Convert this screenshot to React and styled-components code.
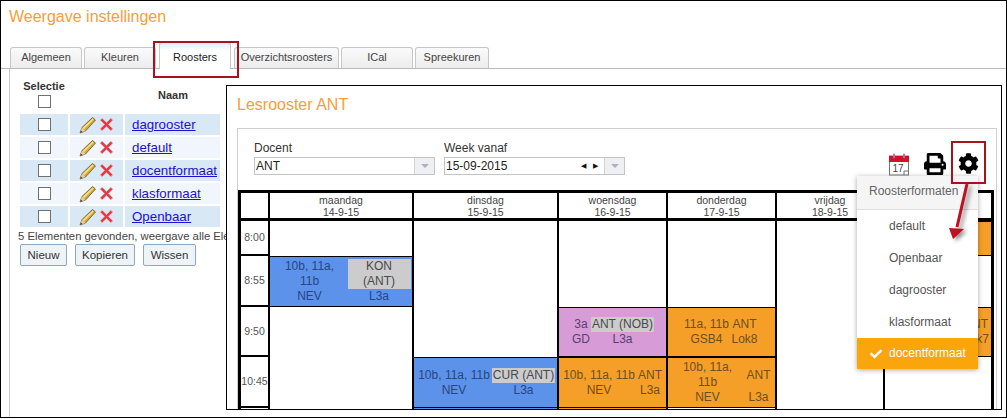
import styled, { createGlobalStyle } from "styled-components";
import { FaPrint, FaCog, FaCheck } from "react-icons/fa";

const GlobalStyle = createGlobalStyle`
  html, body {
    margin: 0;
    padding: 0;
    background: #fff;
    font-family: "Liberation Sans", Arial, sans-serif;
  }
`;

const Frame = styled.div`
  position: relative;
  width: 1007px;
  height: 418px;
  box-sizing: border-box;
  border: 1px solid #000;
  overflow: hidden;
`;

const PageTitle = styled.h1`
  margin: 0;
  padding-left: 8px;
  height: 45px;
  font-size: 16px;
  font-weight: normal;
  line-height: 31px;
  color: #f5a036;
`;

const TabBar = styled.div`
  display: flex;
  align-items: flex-end;
  gap: 2px;
  height: 23px;
  box-sizing: border-box;
  padding-left: 9px;
  border-bottom: 1px solid #b9b9b9;
`;

const Tab = styled.div`
  width: ${(p) => p.$width || 72}px;
  height: ${(p) => (p.$active ? 27 : 22)}px;
  margin: 0 ${(p) => (p.$active ? 1 : 0)}px -1px;
  box-sizing: border-box;
  border: 1px solid #c6c6c6;
  border-bottom: ${(p) => (p.$active ? "none" : "1px solid #b9b9b9")};
  border-radius: 3px 3px 0 0;
  background: ${(p) => (p.$active ? "linear-gradient(#dfeafa, #fff 30%)" : "linear-gradient(#fafafa, #ececec)")};
  font-size: 11px;
  line-height: ${(p) => (p.$active ? 28 : 18)}px;
  text-align: center;
  color: ${(p) => (p.$active ? "#222" : "#444")};
`;

const TabPanel = styled.div`
  display: flex;
  align-items: flex-start;
  margin-left: 8px;
  height: 349px;
  box-sizing: border-box;
  padding-top: 16px;
  border-left: 1px solid #c6c6c6;
`;

const Sidebar = styled.div`
  flex: none;
  width: 216px;
  margin-top: -4px;
  padding-left: 10px;
  box-sizing: border-box;
  overflow: hidden;
  white-space: nowrap;
`;

const HeadRow = styled.div`
  display: grid;
  grid-template-columns: 48px 54px 96px;
  column-gap: 2px;
  height: 33px;
  font-size: 11px;
  font-weight: bold;
  color: #333;
`;

const SelectHead = styled.div`
  display: flex;
  flex-direction: column;
  align-items: center;
  gap: 3px;
  line-height: 11px;
`;

const NameHead = styled.div`
  grid-column: 2 / 4;
  padding: 8px 0 0 88px;
  line-height: 13px;
`;

const Check = styled.span`
  display: block;
  width: 13px;
  height: 13px;
  box-sizing: border-box;
  border: 1px solid #707070;
  background: #fff;
`;

const Row = styled.div`
  display: grid;
  grid-template-columns: 48px 53px 95px;
  column-gap: 2px;
  height: 21px;
  margin-bottom: 2px;
`;

const RowCell = styled.div`
  display: flex;
  align-items: center;
  justify-content: ${(p) => p.$justify || "center"};
  gap: ${(p) => p.$gap || 0}px;
  padding-left: ${(p) => p.$pad || 0}px;
  background: ${(p) => (p.$odd ? "#d9e8f5" : "#f0f6fc")};
`;

const NameLink = styled.a`
  font-size: 13.3px;
  color: #2211cc;
  text-decoration: underline;
`;

const ResultText = styled.div`
  margin: 0 0 0 -2px;
  font-size: 11.3px;
  line-height: 14px;
  color: #444;
`;

const ButtonRow = styled.div`
  display: flex;
  gap: 8px;
  margin-top: 1px;
`;

const Button = styled.button`
  height: 22px;
  width: ${(p) => p.$width}px;
  padding: 0;
  box-sizing: border-box;
  border: 1px solid #8fa7be;
  border-radius: 2px;
  background: #eef3f8;
  font-family: inherit;
  font-size: 11.5px;
  color: #333;
`;

const Card = styled.div`
  flex: none;
  width: 776px;
  height: 325px;
  box-sizing: border-box;
  padding: 0 4px 0 10px;
  border: 1px solid #000;
  overflow: hidden;
`;

const CardTitle = styled.h2`
  margin: 0;
  height: 42px;
  font-size: 16px;
  font-weight: normal;
  line-height: 37px;
  color: #f5a036;
`;

const SchedulePanel = styled.div`
  position: relative;
  height: 300px;
  box-sizing: border-box;
  border: 1px solid #d0d0d0;
`;

const FilterBar = styled.div`
  display: flex;
  align-items: flex-start;
  height: 61px;
  box-sizing: border-box;
  padding: 11px 17px 0 16px;
`;

const Field = styled.div`
  width: ${(p) => p.$width}px;
  margin-right: 9px;
  font-size: 12px;
  line-height: 16px;
  color: #333;
`;

const FieldBox = styled.div`
  display: flex;
  align-items: center;
  height: 18px;
  margin-top: 1px;
  box-sizing: border-box;
  border: 1px solid #c4c4c4;
  background: #fff;
  color: #222;
`;

const FieldValue = styled.span`
  flex: 1;
  padding-left: 1px;
`;

const Spinner = styled.span`
  display: flex;
  gap: 7px;
  margin-right: 6px;
  font-size: 7px;
  color: #111;
`;

const DropButton = styled.span`
  display: flex;
  align-items: center;
  justify-content: center;
  width: 19px;
  height: 16px;
  border-left: 1px solid #d5d5d5;
  background: #eeeff2;
  &::after {
    content: "";
    border: 4px solid transparent;
    border-top: 4px solid #aeb2bc;
    border-bottom: none;
  }
`;

const Tools = styled.div`
  display: flex;
  align-items: flex-start;
  gap: 12px;
  margin-left: auto;
  padding-top: 13px;
`;

const CalendarSvg = styled.svg`
  margin-right: 3px;
`;

const TimeTable = styled.div`
  display: flex;
  width: 756px;
  box-sizing: border-box;
  border-top: 3px solid #000;
  border-left: 3px solid #000;
  border-right: 3px solid #000;
`;

const TimeColumn = styled.div`
  flex: none;
  width: 27px;
  border-right: 2px solid #000;
`;

const DayColumn = styled.div`
  flex: none;
  width: ${(p) => p.$width}px;
  box-sizing: border-box;
  border-right: ${(p) => (p.$last ? "none" : "2px solid #000")};
`;

const DayHead = styled.div`
  height: 28px;
  box-sizing: border-box;
  padding-top: 1px;
  border-bottom: 3px solid #000;
  font-size: 10.5px;
  line-height: 12px;
  text-align: center;
  color: #444;
`;

const TimeCell = styled.div`
  display: flex;
  align-items: center;
  justify-content: center;
  height: ${(p) => p.$height}px;
  box-sizing: border-box;
  padding-bottom: 1px;
  border-bottom: 2px solid #000;
  font-size: 10.5px;
  color: #555;
`;

const Slot = styled.div`
  height: ${(p) => p.$height}px;
`;

const Lesson = styled.div`
  display: grid;
  grid-template-columns: ${(p) => p.$cols};
  justify-content: center;
  align-content: center;
  height: 100%;
  box-sizing: border-box;
  border-top: ${(p) => (p.$open ? "none" : "1px solid #000")};
  border-bottom: 1px solid #000;
  background: ${(p) => p.$bg};
  font-size: 12px;
  line-height: 15px;
  text-align: center;
  white-space: pre-line;
  color: ${(p) => p.$ink};
`;

const Subject = styled.div`
  display: flex;
  align-items: center;
  justify-content: center;
  color: ${(p) => (p.$boxed ? "#4a4a4a" : "inherit")};
  background: ${(p) => (p.$boxed ? "#cccccc" : "transparent")};
  align-self: ${(p) => (p.$boxed ? "center" : "stretch")};
`;

const Menu = styled.div`
  position: absolute;
  left: 619px;
  top: 47px;
  width: 121px;
  background: #fff;
  box-shadow: 0 1px 5px rgba(0, 0, 0, 0.35);
  font-size: 12px;
  color: #555;
`;

const MenuHead = styled.div`
  height: 34px;
  box-sizing: border-box;
  padding-left: 12px;
  background: #f5f5f5;
  border-bottom: 1px solid #ddd;
  line-height: 31px;
  color: #666;
`;

const MenuItem = styled.div`
  position: relative;
  height: ${(p) => (p.$active ? 31 : 32)}px;
  padding-left: 32px;
  line-height: ${(p) => (p.$active ? 31 : 32)}px;
  background: ${(p) => (p.$active ? "#fba50c" : "#fff")};
  color: ${(p) => (p.$active ? "#fff" : "#555")};
  svg {
    position: absolute;
    left: 13px;
    top: 10px;
  }
`;

const Callout = styled.div`
  position: absolute;
  left: ${(p) => p.$left}px;
  top: ${(p) => p.$top}px;
  width: ${(p) => p.$width}px;
  height: ${(p) => p.$height}px;
  box-sizing: border-box;
  border: 2px solid #a5131f;
  pointer-events: none;
`;

const ArrowOverlay = styled.svg`
  position: absolute;
  left: 935px;
  top: 180px;
  filter: drop-shadow(3px 2px 2px rgba(0, 0, 0, 0.45));
`;

const Pencil = () => (
  <svg width="18" height="18" viewBox="0 0 18 18">
    <path d="M1 17 L3 11.5 L13.5 1.5 L16.5 4 L6.5 15 Z" fill="#d9a73a" stroke="#6f5f38" strokeWidth="0.9" />
    <path d="M3.8 11.8 L13.6 2.6 L14.6 3.4 L5 13.2 Z" fill="#f8e08a" />
    <path d="M1 17 L3 11.5 L6.5 15 Z" fill="#e6cda0" />
    <path d="M1 17 L1.9 14.4 L3.6 16 Z" fill="#444" />
  </svg>
);

const Cross = () => (
  <svg width="15" height="15" viewBox="0 0 15 15">
    <path
      d="M1.2 3.2 L3.2 1.2 L7.5 5.5 L11.8 1.2 L13.8 3.2 L9.5 7.5 L13.8 11.8 L11.8 13.8 L7.5 9.5 L3.2 13.8 L1.2 11.8 L5.5 7.5 Z"
      fill="#e63b46"
      stroke="#eda9ad"
      strokeWidth="0.9"
    />
  </svg>
);

const CalendarIcon = () => (
  <CalendarSvg width="20" height="23" viewBox="0 0 20 23">
    <rect x="0.5" y="3" width="19" height="19" fill="#fff" stroke="#777" />
    <rect x="0" y="3" width="20" height="6" fill="#d0112b" />
    <rect x="4" y="0.5" width="2" height="5" rx="1" fill="#888" />
    <rect x="14" y="0.5" width="2" height="5" rx="1" fill="#888" />
    <text x="9" y="19" fontSize="10" textAnchor="middle" fill="#444" fontFamily="Liberation Sans, sans-serif">
      17
    </text>
    <path d="M15 22 V18 H19" fill="none" stroke="#777" />
  </CalendarSvg>
);

const DownArrow = () => (
  <ArrowOverlay width="40" height="65" viewBox="0 0 40 65">
    <path d="M31 3 L21 46" stroke="#c00f1e" strokeWidth="3" fill="none" />
    <path d="M13 47 L28 48 L17 58 Z" fill="#c00f1e" />
  </ArrowOverlay>
);

const formats = ["dagrooster", "default", "docentformaat", "klasformaat", "Openbaar"];
const tabs = [
  { label: "Algemeen" },
  { label: "Kleuren" },
  { label: "Roosters", active: true },
  { label: "Overzichtsroosters", width: 105 },
  { label: "ICal" },
  { label: "Spreekuren", width: 74 },
];
const times = [
  { label: "8:00", height: 35 },
  { label: "8:55", height: 51 },
  { label: "9:50", height: 50 },
  { label: "10:45", height: 51 },
  { label: "", height: 20 },
];
const slotHeights = [35, 51, 50, 51, 20];

const palette = {
  blue: { bg: "#5d92ea", ink: "#27477f" },
  orange: { bg: "#f59f29", ink: "#6f4f1c" },
  purple: { bg: "#d79bd8", ink: "#5a3f70" },
};

const days = [
  {
    name: "maandag", date: "14-9-15", width: 144,
    lessons: {
      1: { color: "blue", cols: "76px 63px", groups: "10b, 11a,\n11b", subject: "KON\n(ANT)", boxed: true, teacher: "NEV", room: "L3a" },
    },
  },
  {
    name: "dinsdag", date: "15-9-15", width: 145,
    lessons: {
      3: { color: "blue", cols: "76px 63px", groups: "10b, 11a, 11b", subject: "CUR (ANT)", boxed: true, teacher: "NEV", room: "L3a" },
      4: { color: "blue", open: true },
    },
  },
  {
    name: "woensdag", date: "16-9-15", width: 109,
    lessons: {
      2: { color: "purple", cols: "20px 63px", groups: "3a", subject: "ANT (NOB)", boxed: true, teacher: "GD", room: "L3a" },
      3: { color: "orange", cols: "75px 27px", groups: "10b, 11a, 11b", subject: "ANT", teacher: "NEV", room: "L3a" },
      4: { color: "orange", open: true },
    },
  },
  {
    name: "donderdag", date: "17-9-15", width: 109,
    lessons: {
      2: { color: "orange", cols: "46px 30px", groups: "11a, 11b", subject: "ANT", teacher: "GSB4", room: "Lok8" },
      3: { color: "orange", cols: "74px 28px", groups: "10b, 11a,\n11b", subject: "ANT", teacher: "NEV", room: "L3a" },
    },
  },
  { name: "vrijdag", date: "18-9-15", width: 108, lessons: {} },
  {
    name: "", date: "", width: 106, last: true,
    lessons: {
      0: { color: "orange" },
      2: { color: "orange", cols: "76px 30px", groups: "11a, 11b", subject: "ANT", teacher: "GSB4", room: "Lok7" },
    },
  },
];

function LessonBlock({ lesson }) {
  const { bg, ink } = palette[lesson.color];
  if (!lesson.groups) return <Lesson $bg={bg} $ink={ink} $cols="1fr" $open={lesson.open} />;
  return (
    <Lesson $bg={bg} $ink={ink} $cols={lesson.cols}>
      <div>{lesson.groups}</div>
      <Subject $boxed={lesson.boxed}>{lesson.subject}</Subject>
      <div>{lesson.teacher}</div>
      <div>{lesson.room}</div>
    </Lesson>
  );
}

export default function App() {
  return (
    <>
      <GlobalStyle />
      <Frame>
        <PageTitle>Weergave instellingen</PageTitle>
        <TabBar>
          {tabs.map((tab) => (
            <Tab key={tab.label} $active={tab.active} $width={tab.width}>
              {tab.label}
            </Tab>
          ))}
        </TabBar>
        <TabPanel>
          <Sidebar>
            <HeadRow>
              <SelectHead>
                Selectie
                <Check />
              </SelectHead>
              <NameHead>Naam</NameHead>
            </HeadRow>
            {formats.map((name, i) => (
              <Row key={name}>
                <RowCell $odd={i % 2 === 0}>
                  <Check />
                </RowCell>
                <RowCell $odd={i % 2 === 0} $gap={2}>
                  <Pencil />
                  <Cross />
                </RowCell>
                <RowCell $odd={i % 2 === 0} $justify="flex-start" $pad={7}>
                  <NameLink href="#">{name}</NameLink>
                </RowCell>
              </Row>
            ))}
            <ResultText>5 Elementen gevonden, weergave alle Elementen</ResultText>
            <ButtonRow>
              <Button $width={47}>Nieuw</Button>
              <Button $width={60}>Kopieren</Button>
              <Button $width={53}>Wissen</Button>
            </ButtonRow>
          </Sidebar>
          <Card>
            <CardTitle>Lesrooster ANT</CardTitle>
            <SchedulePanel>
              <FilterBar>
                <Field $width={181}>
                  Docent
                  <FieldBox>
                    <FieldValue>ANT</FieldValue>
                    <DropButton />
                  </FieldBox>
                </Field>
                <Field $width={181}>
                  Week vanaf
                  <FieldBox>
                    <FieldValue>15-09-2015</FieldValue>
                    <Spinner>
                      <span>◀</span>
                      <span>▶</span>
                    </Spinner>
                    <DropButton />
                  </FieldBox>
                </Field>
                <Tools>
                  <CalendarIcon />
                  <FaPrint size={22} color="#000" />
                  <FaCog size={21} color="#000" />
                </Tools>
              </FilterBar>
              <TimeTable>
                <TimeColumn>
                  <DayHead />
                  {times.map((t) => (
                    <TimeCell key={t.label || "next"} $height={t.height}>
                      {t.label}
                    </TimeCell>
                  ))}
                </TimeColumn>
                {days.map((day) => (
                  <DayColumn key={day.width + day.name} $width={day.width} $last={day.last}>
                    <DayHead>
                      {day.name}
                      <br />
                      {day.date}
                    </DayHead>
                    {slotHeights.map((height, i) => (
                      <Slot key={i} $height={height}>
                        {day.lessons[i] && <LessonBlock lesson={day.lessons[i]} />}
                      </Slot>
                    ))}
                  </DayColumn>
                ))}
              </TimeTable>
              <Menu>
                <MenuHead>Roosterformaten</MenuHead>
                <MenuItem>default</MenuItem>
                <MenuItem>Openbaar</MenuItem>
                <MenuItem>dagrooster</MenuItem>
                <MenuItem>klasformaat</MenuItem>
                <MenuItem $active>
                  <FaCheck size={12} color="#fff" />
                  docentformaat
                </MenuItem>
              </Menu>
            </SchedulePanel>
          </Card>
        </TabPanel>
        <Callout $left={152} $top={40} $width={86} $height={37} />
        <Callout $left={950} $top={140} $width={35} $height={43} />
        <DownArrow />
      </Frame>
    </>
  );
}
